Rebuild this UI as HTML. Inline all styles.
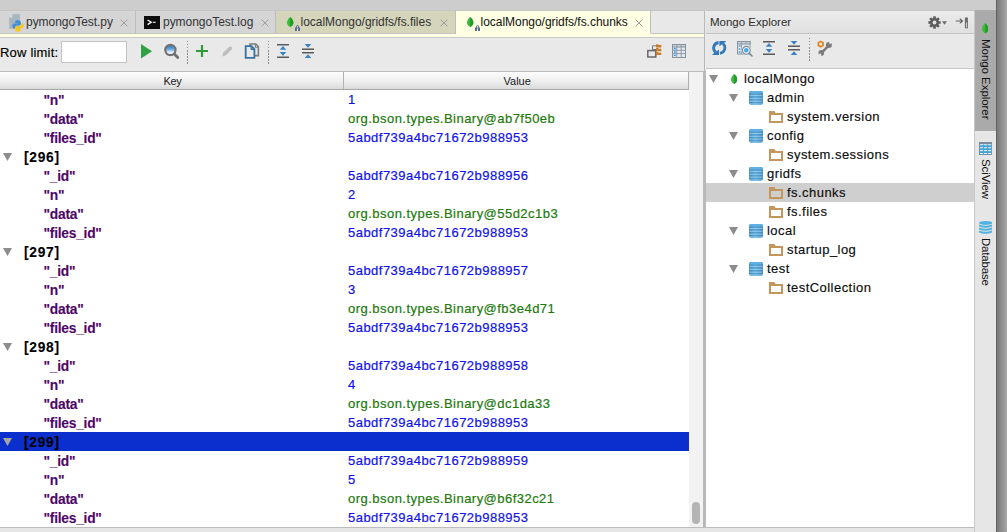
<!DOCTYPE html>
<html>
<head>
<meta charset="utf-8">
<title>Mongo Explorer</title>
<style>
html,body{margin:0;padding:0;}
body{width:1007px;height:532px;overflow:hidden;position:relative;background:#e9e9e9;
  font-family:"Liberation Sans",sans-serif;font-size:13px;color:#1d1d1d;}
.abs{position:absolute;}
#topstrip{left:0;top:0;width:1007px;height:10px;background:#cdcdcd;}
#tabbar{left:0;top:10px;width:704px;height:24px;background:#e8e8e8;border-top:1px solid #c6c6c6;border-bottom:1px solid #c3c3c3;box-sizing:border-box;}
.tab{position:absolute;top:10px;height:24px;box-sizing:border-box;border-right:1px solid #bdbdbd;border-top:1px solid #c6c6c6;border-bottom:1px solid #c3c3c3;}
.tab .lbl{position:absolute;top:4px;white-space:nowrap;font-size:12px;letter-spacing:-.03px;color:#333;}
#yline{left:0;top:34px;width:704px;height:3px;background:#ffffe4;border-bottom:1px solid #c9c9c9;}
#toolbar{left:0;top:38px;width:704px;height:33px;background:#e9e9e9;}
#thead{left:0;top:71px;width:689px;height:19px;box-sizing:border-box;border-top:1px solid #bcbcbc;border-bottom:1.5px solid #a9a9a9;
  background:linear-gradient(#fdfdfd,#f3f3f3 40%,#e2e2e2 85%,#d8d8d8);}
#thead .h{position:absolute;top:3px;font-size:11px;letter-spacing:0;color:#1a1a1a;}
#tbody{left:0;top:90px;width:703px;height:437px;background:#fff;}
.row{position:absolute;left:0;width:689px;height:19px;line-height:19px;white-space:nowrap;}
.row .k{position:absolute;left:43.5px;top:.8px;font-weight:bold;font-size:13.8px;color:#4f0668;letter-spacing:-.25px;-webkit-text-stroke:.1px #4f0668;}
.row .g{position:absolute;left:24px;top:.8px;font-weight:bold;font-size:13.8px;color:#000;letter-spacing:.7px;-webkit-text-stroke:.1px #000;}
.row .v{position:absolute;left:348px;letter-spacing:.470px;}
.blue{color:#1010ee;-webkit-text-stroke:.2px #1010ee;}
.green{color:#1c7a0e;-webkit-text-stroke:.2px #1c7a0e;}
.sel{background:#0a2fcd;}
#bottom{left:0;top:527px;width:974px;height:5px;background:#e6e6e6;border-top:1px solid #bdbdbd;box-sizing:border-box;}
#vsep{left:703px;top:71px;width:3px;height:456px;background:#b9b9b9;}
#vsep2{left:704px;top:10px;width:1.4px;height:61px;background:#b8b8b8;}
#rhead{left:706px;top:10px;width:268px;height:24px;background:linear-gradient(#ebebeb,#e0e0e0);border-top:1px solid #c6c6c6;border-bottom:1px solid #c3c3c3;box-sizing:border-box;}
#rtool{left:706px;top:34px;width:268px;height:34px;background:#e9e9e9;border-bottom:1px solid #c6c6c6;}
#tree{left:706px;top:69px;width:268px;height:458px;background:#fff;}
.trow{position:absolute;left:0;width:268px;height:19px;line-height:19px;white-space:nowrap;font-size:13px;letter-spacing:.450px;color:#0c0c0c;-webkit-text-stroke:.15px #0c0c0c;}
.trow span{position:absolute;top:0;}
.tsel{background:#cfcfcf;}
#rstrip{left:974px;top:10px;width:22px;height:522px;background:#e6e6e6;border-left:1px solid #c8c8c8;box-sizing:border-box;}
#redge{left:996px;top:0;width:11px;height:532px;background:linear-gradient(90deg,#5e5e5e 0,#646464 8%,#7b7b7b 12%,#a7a7a7 100%);}
.vt{position:absolute;transform-origin:0 0;transform:rotate(90deg);white-space:nowrap;font-size:11.5px;color:#141414;line-height:12px;}
</style>
</head>
<body>
<div id="topstrip" class="abs"></div>
<div id="tabbar" class="abs"></div>

<div class="tab" style="left:0;width:136px;background:#d5d5d5;">
<svg class="abs" style="left:9px;top:3px;" width="15" height="18" viewBox="0 0 15 18"><path d="M3.4 0.2H10.8V14.8H0.2V3.4z" fill="#a9b5c0"/><path d="M0.2 3.4L3.4 0.2V3.4z" fill="#d9e0e6"/><g transform="translate(0,1)"><path d="M8.6 5.2c-2 0-2.4.9-2.4 1.7v1.2h2.6v.5H5.2c-1.1 0-1.9.9-1.9 2.5s.8 2.4 1.8 2.4h.9v-1.4c0-1 .9-1.8 1.9-1.8h2.5c.8 0 1.4-.6 1.4-1.4V6.9c0-.9-.9-1.7-3.2-1.7z" fill="#3d8fd1"/><path d="M9.4 16.6c2 0 2.4-.9 2.4-1.7v-1.2H9.2v-.5h3.6c1.1 0 1.9-.9 1.9-2.5s-.8-2.4-1.8-2.4h-.9v1.4c0 1-.9 1.8-1.9 1.8H7.6c-.8 0-1.4.6-1.4 1.4v2c0 .9.9 1.7 3.2 1.7z" fill="#f6c619"/></g></svg><span class="lbl" style="left:26px;">pymongoTest.py</span><svg class="abs" style="left:120px;top:7.7px;" width="8" height="8" viewBox="0 0 8 8"><path d="M0.6 0.6L7.3 7.3M7.3 0.6L0.6 7.3" stroke="#9b9b9b" stroke-width="1" fill="none"/></svg>
</div>
<div class="tab" style="left:136px;width:140px;background:#d5d5d5;">
<svg class="abs" style="left:8px;top:5px;" width="16" height="13" viewBox="0 0 16 13"><rect width="16" height="13" fill="#0d0d0d"/><path d="M3.6 4L7.2 6.3L3.6 8.6" stroke="#fff" stroke-width="1.3" fill="none"/><rect x="8.8" y="5.7" width="2.8" height="1.2" fill="#e8e8e8"/></svg><span class="lbl" style="left:27px;">pymongoTest.log</span><svg class="abs" style="left:124.5px;top:7.7px;" width="8" height="8" viewBox="0 0 8 8"><path d="M0.6 0.6L7.3 7.3M7.3 0.6L0.6 7.3" stroke="#9b9b9b" stroke-width="1" fill="none"/></svg>
</div>
<div class="tab" style="left:276px;width:180px;background:#d4d5ba;">
<svg class="abs" style="left:11.3px;top:6px;" width="6.4" height="10" viewBox="0 0 7 11" preserveAspectRatio="none"><path d="M3.5 0C5.6 2 7 3.8 7 6C7 8.3 5.4 10 3.5 11C1.6 10 0 8.3 0 6C0 3.8 1.4 2 3.5 0z" fill="#3bbb3b"/><path d="M3.5 0C5.6 2 7 3.8 7 6C7 8.3 5.4 10 3.5 11z" fill="#219c2b"/></svg><svg class="abs" style="left:19px;top:13.8px;" width="5" height="6" viewBox="0 0 5 6"><path d="M1.3 3V1.8A1.2 1.2 0 0 1 3.7 1.8V3" fill="none" stroke="#55698f" stroke-width="1"/><rect x="0" y="2.6" width="5" height="3.4" fill="#55698f"/><rect x="1.9" y="3.4" width="1.2" height="2.6" fill="#e6e8d8"/></svg><span class="lbl" style="left:24.5px;">localMongo/gridfs/fs.files</span><svg class="abs" style="left:163.5px;top:7.7px;" width="8" height="8" viewBox="0 0 8 8"><path d="M0.6 0.6L7.3 7.3M7.3 0.6L0.6 7.3" stroke="#9b9b9b" stroke-width="1" fill="none"/></svg>
</div>
<div id="yline" class="abs"></div>
<div class="tab" style="left:456px;width:195px;background:#ffffe4;border-bottom:1px solid #ffffe4;">
<svg class="abs" style="left:11.3px;top:6px;" width="6.4" height="10" viewBox="0 0 7 11" preserveAspectRatio="none"><path d="M3.5 0C5.6 2 7 3.8 7 6C7 8.3 5.4 10 3.5 11C1.6 10 0 8.3 0 6C0 3.8 1.4 2 3.5 0z" fill="#3bbb3b"/><path d="M3.5 0C5.6 2 7 3.8 7 6C7 8.3 5.4 10 3.5 11z" fill="#219c2b"/></svg><svg class="abs" style="left:19px;top:13.8px;" width="5" height="6" viewBox="0 0 5 6"><path d="M1.3 3V1.8A1.2 1.2 0 0 1 3.7 1.8V3" fill="none" stroke="#55698f" stroke-width="1"/><rect x="0" y="2.6" width="5" height="3.4" fill="#55698f"/><rect x="1.9" y="3.4" width="1.2" height="2.6" fill="#e6e8d8"/></svg><span class="lbl" style="left:24.5px;color:#111;">localMongo/gridfs/fs.chunks</span><svg class="abs" style="left:178.5px;top:7.7px;" width="8" height="8" viewBox="0 0 8 8"><path d="M0.6 0.6L7.3 7.3M7.3 0.6L0.6 7.3" stroke="#9b9b9b" stroke-width="1" fill="none"/></svg>
</div>

<div id="toolbar" class="abs">
  <span class="abs" style="left:0;top:7px;font-size:13px;letter-spacing:.2px;color:#000;-webkit-text-stroke:.15px #000;">Row limit:</span>
  <div class="abs" style="left:61px;top:3px;width:66px;height:22px;background:#fff;border:1px solid #c2c2c2;box-sizing:border-box;"></div>
</div>
<svg class="abs" style="left:141px;top:44px;" width="11" height="15" viewBox="0 0 11 15"><path d="M0 0L11 7.3L0 14.6z" fill="#2fa343"/></svg><svg class="abs" style="left:163px;top:43px;" width="17" height="17" viewBox="0 0 17 17"><defs><linearGradient id="mg" x1="0" x2="0" y1="0" y2="1"><stop offset="0" stop-color="#2f7fd0"/><stop offset=".35" stop-color="#5a9fdc"/><stop offset=".8" stop-color="#eef4fb"/><stop offset="1" stop-color="#f6f9fc"/></linearGradient></defs><circle cx="7.4" cy="7" r="4.4" fill="url(#mg)"/><circle cx="7.4" cy="7" r="5.1" fill="none" stroke="#707070" stroke-width="2.2"/><path d="M11.3 11L14.8 14.6" stroke="#707070" stroke-width="2.8" stroke-linecap="round"/></svg><div class="abs" style="left:186.5px;top:41.4px;width:1.4px;height:22.9px;background:repeating-linear-gradient(#8a8a8a 0 1.3px,transparent 1.3px 3.07px);"></div><svg class="abs" style="left:196px;top:45px;" width="12" height="12" viewBox="0 0 12 12"><path d="M6 0V12M0 6H12" stroke="#2f9a38" stroke-width="2.2"/></svg><svg class="abs" style="left:222px;top:46px;" width="11" height="11" viewBox="0 0 11 11"><path d="M0.2 10.4L1.2 6.8L7.5 0.6Q8.4 0 9.6 1Q10.8 2.2 10.1 3.1L3.9 9.3z" fill="#bdbdbd"/></svg><svg class="abs" style="left:244px;top:43px;" width="16" height="16" viewBox="0 0 16 16"><path d="M6 1H11.8L14.4 3.8V12.6H6z" fill="#e6e6e6" stroke="#7d7d7d" stroke-width="1.6"/><path d="M11.3 1V4.2H14.4" fill="none" stroke="#7d7d7d" stroke-width="1.1"/><path d="M1.7 3.2H7.4L10.4 6.2V14.8H1.7z" fill="#e9e9e9" stroke="#3472a6" stroke-width="1.8"/><path d="M7 3.2V6.6H10.4z" fill="#5a93c4" stroke="#3472a6" stroke-width="1"/></svg><div class="abs" style="left:267.5px;top:41.4px;width:1.4px;height:22.9px;background:repeating-linear-gradient(#8a8a8a 0 1.3px,transparent 1.3px 3.07px);"></div><svg class="abs" style="left:277px;top:44.3px;" width="12" height="14" viewBox="0 0 12 14"><rect x="0" y="0" width="12" height="1.5" fill="#5a5a5a"/><rect x="0" y="12.5" width="12" height="1.5" fill="#5a5a5a"/><path d="M6 2.1L9.3 5.8H2.7z" fill="#3b82c4"/><path d="M6 11.7L9.3 8.1H2.7z" fill="#3b82c4"/></svg><svg class="abs" style="left:302px;top:44.2px;" width="12" height="14" viewBox="0 0 12 14"><rect x="0" y="4.45" width="12" height="1.5" fill="#5a5a5a"/><rect x="0" y="8" width="12" height="1.5" fill="#5a5a5a"/><path d="M6 3.8L9.3 0H2.7z" fill="#3b82c4"/><path d="M6 10.2L9.3 14H2.7z" fill="#3b82c4"/></svg>
<svg class="abs" style="left:647px;top:44px;" width="15" height="14" viewBox="0 0 15 14"><path d="M5.5 1.8V6M5.5 1.8H9M5.5 5.5H9M7.3 5.5V9.5H9" stroke="#7a7a7a" stroke-width="1" fill="none"/><rect x="0.8" y="6.6" width="8" height="6.4" fill="#e9e9e9" stroke="#6a6a6a" stroke-width="1.5"/><path d="M9 0.3h2l.6.7h2.7v2.4H9z" fill="#c77d2b"/><path d="M9 4.1h2l.6.7h2.7v2.4H9z" fill="#c77d2b"/><path d="M9 8h2l.6.7h2.7v2.4H9z" fill="#c77d2b"/></svg><svg class="abs" style="left:672px;top:44px;" width="14" height="14" viewBox="0 0 14 14"><rect x="0.5" y="0.5" width="13" height="13" fill="#e6eaee" stroke="#8492a0" stroke-width="1"/><rect x="0.5" y="0.5" width="13" height="2.5" fill="#c9d3dc" stroke="#8492a0" stroke-width="1"/><path d="M4.8 0.5V13.5M9.2 0.5V13.5M0.5 6.3H13.5M0.5 9.6H13.5" stroke="#8f9ba8" stroke-width="1" fill="none"/><rect x="1.8" y="3.9" width="2" height="1.6" fill="#3f9fe0"/><rect x="1.8" y="7.2" width="2" height="1.6" fill="#3f9fe0"/><rect x="1.8" y="10.5" width="2" height="1.6" fill="#3f9fe0"/></svg>

<div id="thead" class="abs">
  <span class="h" style="left:163.5px;letter-spacing:-.3px">Key</span>
  <span class="h" style="left:503.5px;">Value</span>
  <div class="abs" style="left:343px;top:0;width:1px;height:17px;background:#b2b2b2;"></div>
  <div class="abs" style="left:687.5px;top:0;width:1.5px;height:17px;background:#b0b0b0;"></div>
</div>

<div class="abs" style="left:689px;top:71px;width:14px;height:19px;background:#f2f2f2;border-top:1px solid #bcbcbc;box-sizing:border-box;"></div>
<div id="tbody" class="abs">
<div class="row" style="top:0px;"><span class="k">&quot;n&quot;</span><span class="v blue">1</span></div>
<div class="row" style="top:19px;"><span class="k">&quot;data&quot;</span><span class="v green">org.bson.types.Binary@ab7f50eb</span></div>
<div class="row" style="top:38px;"><span class="k">&quot;files_id&quot;</span><span class="v blue">5abdf739a4bc71672b988953</span></div>
<div class="row" style="top:57px;"><svg class="abs" style="left:3px;top:6px;" width="9" height="8" viewBox="0 0 9 8"><path d="M0 0H9L4.5 8z" fill="#8c8c8c"/></svg><span class="g">[296]</span></div>
<div class="row" style="top:76px;"><span class="k">&quot;_id&quot;</span><span class="v blue">5abdf739a4bc71672b988956</span></div>
<div class="row" style="top:95px;"><span class="k">&quot;n&quot;</span><span class="v blue">2</span></div>
<div class="row" style="top:114px;"><span class="k">&quot;data&quot;</span><span class="v green">org.bson.types.Binary@55d2c1b3</span></div>
<div class="row" style="top:133px;"><span class="k">&quot;files_id&quot;</span><span class="v blue">5abdf739a4bc71672b988953</span></div>
<div class="row" style="top:152px;"><svg class="abs" style="left:3px;top:6px;" width="9" height="8" viewBox="0 0 9 8"><path d="M0 0H9L4.5 8z" fill="#8c8c8c"/></svg><span class="g">[297]</span></div>
<div class="row" style="top:171px;"><span class="k">&quot;_id&quot;</span><span class="v blue">5abdf739a4bc71672b988957</span></div>
<div class="row" style="top:190px;"><span class="k">&quot;n&quot;</span><span class="v blue">3</span></div>
<div class="row" style="top:209px;"><span class="k">&quot;data&quot;</span><span class="v green">org.bson.types.Binary@fb3e4d71</span></div>
<div class="row" style="top:228px;"><span class="k">&quot;files_id&quot;</span><span class="v blue">5abdf739a4bc71672b988953</span></div>
<div class="row" style="top:247px;"><svg class="abs" style="left:3px;top:6px;" width="9" height="8" viewBox="0 0 9 8"><path d="M0 0H9L4.5 8z" fill="#8c8c8c"/></svg><span class="g">[298]</span></div>
<div class="row" style="top:266px;"><span class="k">&quot;_id&quot;</span><span class="v blue">5abdf739a4bc71672b988958</span></div>
<div class="row" style="top:285px;"><span class="k">&quot;n&quot;</span><span class="v blue">4</span></div>
<div class="row" style="top:304px;"><span class="k">&quot;data&quot;</span><span class="v green">org.bson.types.Binary@dc1da33</span></div>
<div class="row" style="top:323px;"><span class="k">&quot;files_id&quot;</span><span class="v blue">5abdf739a4bc71672b988953</span></div>
<div class="row sel" style="top:342px;"><svg class="abs" style="left:3px;top:6px;" width="9" height="8" viewBox="0 0 9 8"><path d="M0 0H9L4.5 8z" fill="#a6a6a0"/></svg><span class="g">[299]</span></div>
<div class="row" style="top:361px;"><span class="k">&quot;_id&quot;</span><span class="v blue">5abdf739a4bc71672b988959</span></div>
<div class="row" style="top:380px;"><span class="k">&quot;n&quot;</span><span class="v blue">5</span></div>
<div class="row" style="top:399px;"><span class="k">&quot;data&quot;</span><span class="v green">org.bson.types.Binary@b6f32c21</span></div>
<div class="row" style="top:418px;"><span class="k">&quot;files_id&quot;</span><span class="v blue">5abdf739a4bc71672b988953</span></div>
<div class="abs" style="left:689px;top:0;width:14px;height:437px;background:#f2f2f2;"></div>
<div class="abs" style="left:692px;top:412px;width:8px;height:22px;border-radius:4px;background:#b4b4b4;"></div>
</div>

<div id="vsep" class="abs"></div><div id="vsep2" class="abs"></div>
<div id="rhead" class="abs"><span class="abs" style="left:4px;top:5px;font-size:11.5px;letter-spacing:0;color:#2b2b2b;">Mongo Explorer</span></div>
<div id="rtool" class="abs"></div>
<svg class="abs" style="left:712px;top:41.2px;" width="14.5" height="14" viewBox="0 0 14.5 14"><path d="M6.6 1.5A5.6 5.6 0 0 0 3.6 11.3" fill="none" stroke="#3279b8" stroke-width="2.9"/><path d="M7.9 12.4A5.6 5.6 0 0 0 10.9 2.6" fill="none" stroke="#3279b8" stroke-width="2.7"/><path d="M7.4 0H14V0.4L7.4 5.3z" fill="#3279b8"/><path d="M7 13.9H0.3V13.5L7 8.5z" fill="#3279b8"/></svg><svg class="abs" style="left:737px;top:41px;" width="16" height="16" viewBox="0 0 16 16"><rect x="0.5" y="0.5" width="12.5" height="12.5" fill="#e6eaee" stroke="#8492a0" stroke-width="1"/><rect x="0.5" y="0.5" width="12.5" height="2.5" fill="#c9d3dc" stroke="#8492a0" stroke-width="1"/><path d="M4.6 0.5V13M8.8 0.5V3" stroke="#8f9ba8" stroke-width="1" fill="none"/><rect x="1.7" y="4.3" width="1.8" height="1.5" fill="#3f9fe0"/><rect x="1.7" y="7.3" width="1.8" height="1.5" fill="#3f9fe0"/><rect x="1.7" y="10.3" width="1.8" height="1.5" fill="#3f9fe0"/><circle cx="9.3" cy="9.3" r="3.6" fill="#4aa8e8" stroke="#eef2f5" stroke-width="2.6"/><circle cx="9.3" cy="9.3" r="3.9" fill="none" stroke="#7a8794" stroke-width="1.1"/><path d="M12.2 12.2L15 15" stroke="#7a8794" stroke-width="1.6" stroke-linecap="round"/></svg><svg class="abs" style="left:763px;top:41.2px;" width="12" height="14" viewBox="0 0 12 14"><rect x="0" y="0" width="12" height="1.5" fill="#5a5a5a"/><rect x="0" y="12.5" width="12" height="1.5" fill="#5a5a5a"/><path d="M6 2.1L9.3 5.8H2.7z" fill="#3b82c4"/><path d="M6 11.7L9.3 8.1H2.7z" fill="#3b82c4"/></svg><svg class="abs" style="left:788px;top:41.2px;" width="12" height="14" viewBox="0 0 12 14"><rect x="0" y="4.45" width="12" height="1.5" fill="#5a5a5a"/><rect x="0" y="8" width="12" height="1.5" fill="#5a5a5a"/><path d="M6 3.8L9.3 0H2.7z" fill="#3b82c4"/><path d="M6 10.2L9.3 14H2.7z" fill="#3b82c4"/></svg><div class="abs" style="left:809px;top:37.8px;width:1.4px;height:22.8px;background:repeating-linear-gradient(#8a8a8a 0 1.3px,transparent 1.3px 3.07px);"></div><svg class="abs" style="left:816px;top:40px;" width="17" height="17" viewBox="0 0 17 17"><path d="M5.8 12.6L12.3 5.8" stroke="#7c7c7c" stroke-width="2.5" fill="none"/><circle cx="5.3" cy="12.9" r="2.8" fill="#7c7c7c"/><circle cx="12.9" cy="5.1" r="3" fill="#7c7c7c"/><path d="M1.2 16.6L3.9 13.3L5.3 14.5L4.8 17z" fill="#e9e9e9"/><path d="M17 1.4L14.2 4.3L13 3L14 0.3z" fill="#e9e9e9"/><path d="M4.7 0.4L7.9 2.25L7.9 5.95L4.7 7.8L1.5 5.95L1.5 2.25z" fill="#d98a2b"/><circle cx="4.7" cy="4.1" r="1.5" fill="#f5ead8"/></svg><svg class="abs" style="left:927.5px;top:16px;" width="13" height="13" viewBox="0 0 13 13"><g fill="#5e5e5e"><circle cx="6.5" cy="6.5" r="4.5"/><rect x="5.2" y="0.3" width="2.6" height="12.4" rx=".3" transform="rotate(0 6.5 6.5)"/><rect x="5.2" y="0.3" width="2.6" height="12.4" rx=".3" transform="rotate(45 6.5 6.5)"/><rect x="5.2" y="0.3" width="2.6" height="12.4" rx=".3" transform="rotate(90 6.5 6.5)"/><rect x="5.2" y="0.3" width="2.6" height="12.4" rx=".3" transform="rotate(135 6.5 6.5)"/></g><circle cx="6.5" cy="6.5" r="1.9" fill="#e4e4e4"/></svg><svg class="abs" style="left:942px;top:20.5px;" width="5" height="4" viewBox="0 0 5 4"><path d="M0 0.3H5L2.5 3.7z" fill="#6a6a6a"/></svg><svg class="abs" style="left:955px;top:16.5px;" width="14" height="12" viewBox="0 0 14 12"><path d="M0.8 4H7.3M4.8 1.7L7.5 4L4.8 6.3" stroke="#5e5e5e" stroke-width="1.1" fill="none"/><rect x="9.9" y="0.5" width="3" height="10.8" fill="#6a6a6a"/><rect x="10.9" y="5.6" width="1" height="4.8" fill="#d8d8d8"/></svg>
<div id="tree" class="abs">
<div class="trow" style="top:0px;"><svg class="abs" style="left:3px;top:6px;" width="9" height="8" viewBox="0 0 9 8"><path d="M0 0H9L4.5 8z" fill="#8c8c8c"/></svg><svg class="abs" style="left:25px;top:4.6px;" width="6.4" height="10" viewBox="0 0 7 11" preserveAspectRatio="none"><path d="M3.5 0C5.6 2 7 3.8 7 6C7 8.3 5.4 10 3.5 11C1.6 10 0 8.3 0 6C0 3.8 1.4 2 3.5 0z" fill="#3bbb3b"/><path d="M3.5 0C5.6 2 7 3.8 7 6C7 8.3 5.4 10 3.5 11z" fill="#219c2b"/></svg><span style="left:38px;">localMongo</span></div>
<div class="trow" style="top:19px;"><svg class="abs" style="left:23px;top:6px;" width="9" height="8" viewBox="0 0 9 8"><path d="M0 0H9L4.5 8z" fill="#8c8c8c"/></svg><svg class="abs" style="left:43px;top:3px;" width="14" height="14" viewBox="0 0 14 14"><defs><linearGradient id="dbg" x1="0" x2="1" y1="0" y2="0"><stop offset="0" stop-color="#4796cf"/><stop offset=".45" stop-color="#66b8e8"/><stop offset="1" stop-color="#4593cc"/></linearGradient></defs><rect x="0" y="0" width="14" height="14" rx="2.4" fill="url(#dbg)"/><rect x="0.2" y="0" width="13.6" height="2.6" rx="1.6" fill="#5fb1e4"/><rect x="0" y="2.7" width="14" height="1.1" fill="#356f9e" opacity=".5"/><rect x="0.5" y="3.8" width="13" height="0.9" fill="#c9e8f8" opacity=".6"/><rect x="0" y="5.6" width="14" height="1.1" fill="#356f9e" opacity=".5"/><rect x="0.5" y="6.7" width="13" height="0.9" fill="#c9e8f8" opacity=".6"/><rect x="0" y="8.5" width="14" height="1.1" fill="#356f9e" opacity=".5"/><rect x="0.5" y="9.6" width="13" height="0.9" fill="#c9e8f8" opacity=".6"/><rect x="0" y="11.4" width="14" height="1.1" fill="#356f9e" opacity=".5"/><rect x="0.5" y="12.5" width="13" height="0.9" fill="#c9e8f8" opacity=".6"/></svg><span style="left:61px;">admin</span></div>
<div class="trow" style="top:38px;"><svg class="abs" style="left:62.9px;top:4px;" width="14" height="12" viewBox="0 0 14 12"><path d="M1 3H13V11H1z" fill="none" stroke="#c4965b" stroke-width="2"/><path d="M0 0H5.4L6.8 2.2H0z" fill="#c4965b"/></svg><span style="left:81px;">system.version</span></div>
<div class="trow" style="top:57px;"><svg class="abs" style="left:23px;top:6px;" width="9" height="8" viewBox="0 0 9 8"><path d="M0 0H9L4.5 8z" fill="#8c8c8c"/></svg><svg class="abs" style="left:43px;top:3px;" width="14" height="14" viewBox="0 0 14 14"><rect x="0" y="0" width="14" height="14" rx="2.4" fill="url(#dbg)"/><rect x="0.2" y="0" width="13.6" height="2.6" rx="1.6" fill="#5fb1e4"/><rect x="0" y="2.7" width="14" height="1.1" fill="#356f9e" opacity=".5"/><rect x="0.5" y="3.8" width="13" height="0.9" fill="#c9e8f8" opacity=".6"/><rect x="0" y="5.6" width="14" height="1.1" fill="#356f9e" opacity=".5"/><rect x="0.5" y="6.7" width="13" height="0.9" fill="#c9e8f8" opacity=".6"/><rect x="0" y="8.5" width="14" height="1.1" fill="#356f9e" opacity=".5"/><rect x="0.5" y="9.6" width="13" height="0.9" fill="#c9e8f8" opacity=".6"/><rect x="0" y="11.4" width="14" height="1.1" fill="#356f9e" opacity=".5"/><rect x="0.5" y="12.5" width="13" height="0.9" fill="#c9e8f8" opacity=".6"/></svg><span style="left:61px;">config</span></div>
<div class="trow" style="top:76px;"><svg class="abs" style="left:62.9px;top:4px;" width="14" height="12" viewBox="0 0 14 12"><path d="M1 3H13V11H1z" fill="none" stroke="#c4965b" stroke-width="2"/><path d="M0 0H5.4L6.8 2.2H0z" fill="#c4965b"/></svg><span style="left:81px;">system.sessions</span></div>
<div class="trow" style="top:95px;"><svg class="abs" style="left:23px;top:6px;" width="9" height="8" viewBox="0 0 9 8"><path d="M0 0H9L4.5 8z" fill="#8c8c8c"/></svg><svg class="abs" style="left:43px;top:3px;" width="14" height="14" viewBox="0 0 14 14"><rect x="0" y="0" width="14" height="14" rx="2.4" fill="url(#dbg)"/><rect x="0.2" y="0" width="13.6" height="2.6" rx="1.6" fill="#5fb1e4"/><rect x="0" y="2.7" width="14" height="1.1" fill="#356f9e" opacity=".5"/><rect x="0.5" y="3.8" width="13" height="0.9" fill="#c9e8f8" opacity=".6"/><rect x="0" y="5.6" width="14" height="1.1" fill="#356f9e" opacity=".5"/><rect x="0.5" y="6.7" width="13" height="0.9" fill="#c9e8f8" opacity=".6"/><rect x="0" y="8.5" width="14" height="1.1" fill="#356f9e" opacity=".5"/><rect x="0.5" y="9.6" width="13" height="0.9" fill="#c9e8f8" opacity=".6"/><rect x="0" y="11.4" width="14" height="1.1" fill="#356f9e" opacity=".5"/><rect x="0.5" y="12.5" width="13" height="0.9" fill="#c9e8f8" opacity=".6"/></svg><span style="left:61px;">gridfs</span></div>
<div class="trow tsel" style="top:114px;"><svg class="abs" style="left:62.9px;top:4px;" width="14" height="12" viewBox="0 0 14 12"><path d="M1 3H13V11H1z" fill="none" stroke="#c4965b" stroke-width="2"/><path d="M0 0H5.4L6.8 2.2H0z" fill="#c4965b"/></svg><span style="left:81px;">fs.chunks</span></div>
<div class="trow" style="top:133px;"><svg class="abs" style="left:62.9px;top:4px;" width="14" height="12" viewBox="0 0 14 12"><path d="M1 3H13V11H1z" fill="none" stroke="#c4965b" stroke-width="2"/><path d="M0 0H5.4L6.8 2.2H0z" fill="#c4965b"/></svg><span style="left:81px;">fs.files</span></div>
<div class="trow" style="top:152px;"><svg class="abs" style="left:23px;top:6px;" width="9" height="8" viewBox="0 0 9 8"><path d="M0 0H9L4.5 8z" fill="#8c8c8c"/></svg><svg class="abs" style="left:43px;top:3px;" width="14" height="14" viewBox="0 0 14 14"><rect x="0" y="0" width="14" height="14" rx="2.4" fill="url(#dbg)"/><rect x="0.2" y="0" width="13.6" height="2.6" rx="1.6" fill="#5fb1e4"/><rect x="0" y="2.7" width="14" height="1.1" fill="#356f9e" opacity=".5"/><rect x="0.5" y="3.8" width="13" height="0.9" fill="#c9e8f8" opacity=".6"/><rect x="0" y="5.6" width="14" height="1.1" fill="#356f9e" opacity=".5"/><rect x="0.5" y="6.7" width="13" height="0.9" fill="#c9e8f8" opacity=".6"/><rect x="0" y="8.5" width="14" height="1.1" fill="#356f9e" opacity=".5"/><rect x="0.5" y="9.6" width="13" height="0.9" fill="#c9e8f8" opacity=".6"/><rect x="0" y="11.4" width="14" height="1.1" fill="#356f9e" opacity=".5"/><rect x="0.5" y="12.5" width="13" height="0.9" fill="#c9e8f8" opacity=".6"/></svg><span style="left:61px;">local</span></div>
<div class="trow" style="top:171px;"><svg class="abs" style="left:62.9px;top:4px;" width="14" height="12" viewBox="0 0 14 12"><path d="M1 3H13V11H1z" fill="none" stroke="#c4965b" stroke-width="2"/><path d="M0 0H5.4L6.8 2.2H0z" fill="#c4965b"/></svg><span style="left:81px;">startup_log</span></div>
<div class="trow" style="top:190px;"><svg class="abs" style="left:23px;top:6px;" width="9" height="8" viewBox="0 0 9 8"><path d="M0 0H9L4.5 8z" fill="#8c8c8c"/></svg><svg class="abs" style="left:43px;top:3px;" width="14" height="14" viewBox="0 0 14 14"><rect x="0" y="0" width="14" height="14" rx="2.4" fill="url(#dbg)"/><rect x="0.2" y="0" width="13.6" height="2.6" rx="1.6" fill="#5fb1e4"/><rect x="0" y="2.7" width="14" height="1.1" fill="#356f9e" opacity=".5"/><rect x="0.5" y="3.8" width="13" height="0.9" fill="#c9e8f8" opacity=".6"/><rect x="0" y="5.6" width="14" height="1.1" fill="#356f9e" opacity=".5"/><rect x="0.5" y="6.7" width="13" height="0.9" fill="#c9e8f8" opacity=".6"/><rect x="0" y="8.5" width="14" height="1.1" fill="#356f9e" opacity=".5"/><rect x="0.5" y="9.6" width="13" height="0.9" fill="#c9e8f8" opacity=".6"/><rect x="0" y="11.4" width="14" height="1.1" fill="#356f9e" opacity=".5"/><rect x="0.5" y="12.5" width="13" height="0.9" fill="#c9e8f8" opacity=".6"/></svg><span style="left:61px;">test</span></div>
<div class="trow" style="top:209px;"><svg class="abs" style="left:62.9px;top:4px;" width="14" height="12" viewBox="0 0 14 12"><path d="M1 3H13V11H1z" fill="none" stroke="#c4965b" stroke-width="2"/><path d="M0 0H5.4L6.8 2.2H0z" fill="#c4965b"/></svg><span style="left:81px;">testCollection</span></div>
</div>
<div id="rstrip" class="abs">
  <div class="abs" style="left:0;top:0;width:21px;height:121px;background:#aaaaaa;"></div>
  <svg class="abs" style="left:7px;top:13px;" width="6.4" height="10.5" viewBox="0 0 7 11" preserveAspectRatio="none"><path d="M3.5 0C5.6 2 7 3.8 7 6C7 8.3 5.4 10 3.5 11C1.6 10 0 8.3 0 6C0 3.8 1.4 2 3.5 0z" fill="#3bbb3b"/><path d="M3.5 0C5.6 2 7 3.8 7 6C7 8.3 5.4 10 3.5 11z" fill="#219c2b"/></svg>
  <span class="vt" style="left:16.8px;top:28.5px;letter-spacing:-.05px;">Mongo Explorer</span>
  <svg class="abs" style="left:3.8px;top:132px;" width="13.3" height="13" viewBox="0 0 13.3 13"><rect x="0" y="0" width="13.3" height="13" fill="#7c8b99"/><rect x="1" y="2.3" width="3.2" height="10" fill="#35ade4"/><rect x="5" y="2.3" width="3.2" height="10" fill="#35ade4"/><rect x="9.1" y="2.3" width="3.2" height="10" fill="#35ade4"/><rect x="1" y="2.3" width="11.3" height="0.9" fill="#f4fafd"/><rect x="1" y="5.3" width="11.3" height="0.9" fill="#f4fafd"/><rect x="1" y="8.2" width="11.3" height="0.9" fill="#f4fafd"/><rect x="1" y="11.1" width="11.3" height="0.9" fill="#f4fafd"/><rect x="4.2" y="2.3" width="0.8" height="10" fill="#7c8b99"/><rect x="8.2" y="2.3" width="0.9" height="10" fill="#7c8b99"/></svg>
  <span class="vt" style="left:16.8px;top:148.5px;letter-spacing:-.1px;">SciView</span>
  <svg class="abs" style="left:3.7px;top:210.8px;" width="13.4" height="13.6" viewBox="0 0 13.4 13.6"><ellipse cx="6.7" cy="1.9" rx="6.6" ry="1.9" fill="#4fb2e2"/><path d="M0.1 3.5Q6.7 6.1 13.3 3.5V5.4Q6.7 8.3 0.1 5.4z" fill="#4fb2e2"/><path d="M0.1 6.5Q6.7 9.1 13.3 6.5V8.4Q6.7 11.3 0.1 8.4z" fill="#4fb2e2"/><path d="M0.1 9.5Q6.7 12.1 13.3 9.5V11.4Q6.7 14.3 0.1 11.4z" fill="#4fb2e2"/></svg>
  <span class="vt" style="left:16.8px;top:228.2px;letter-spacing:-.2px;">Database</span>
</div>
<div id="redge" class="abs"></div>
<div id="bottom" class="abs"></div>
</body>
</html>
